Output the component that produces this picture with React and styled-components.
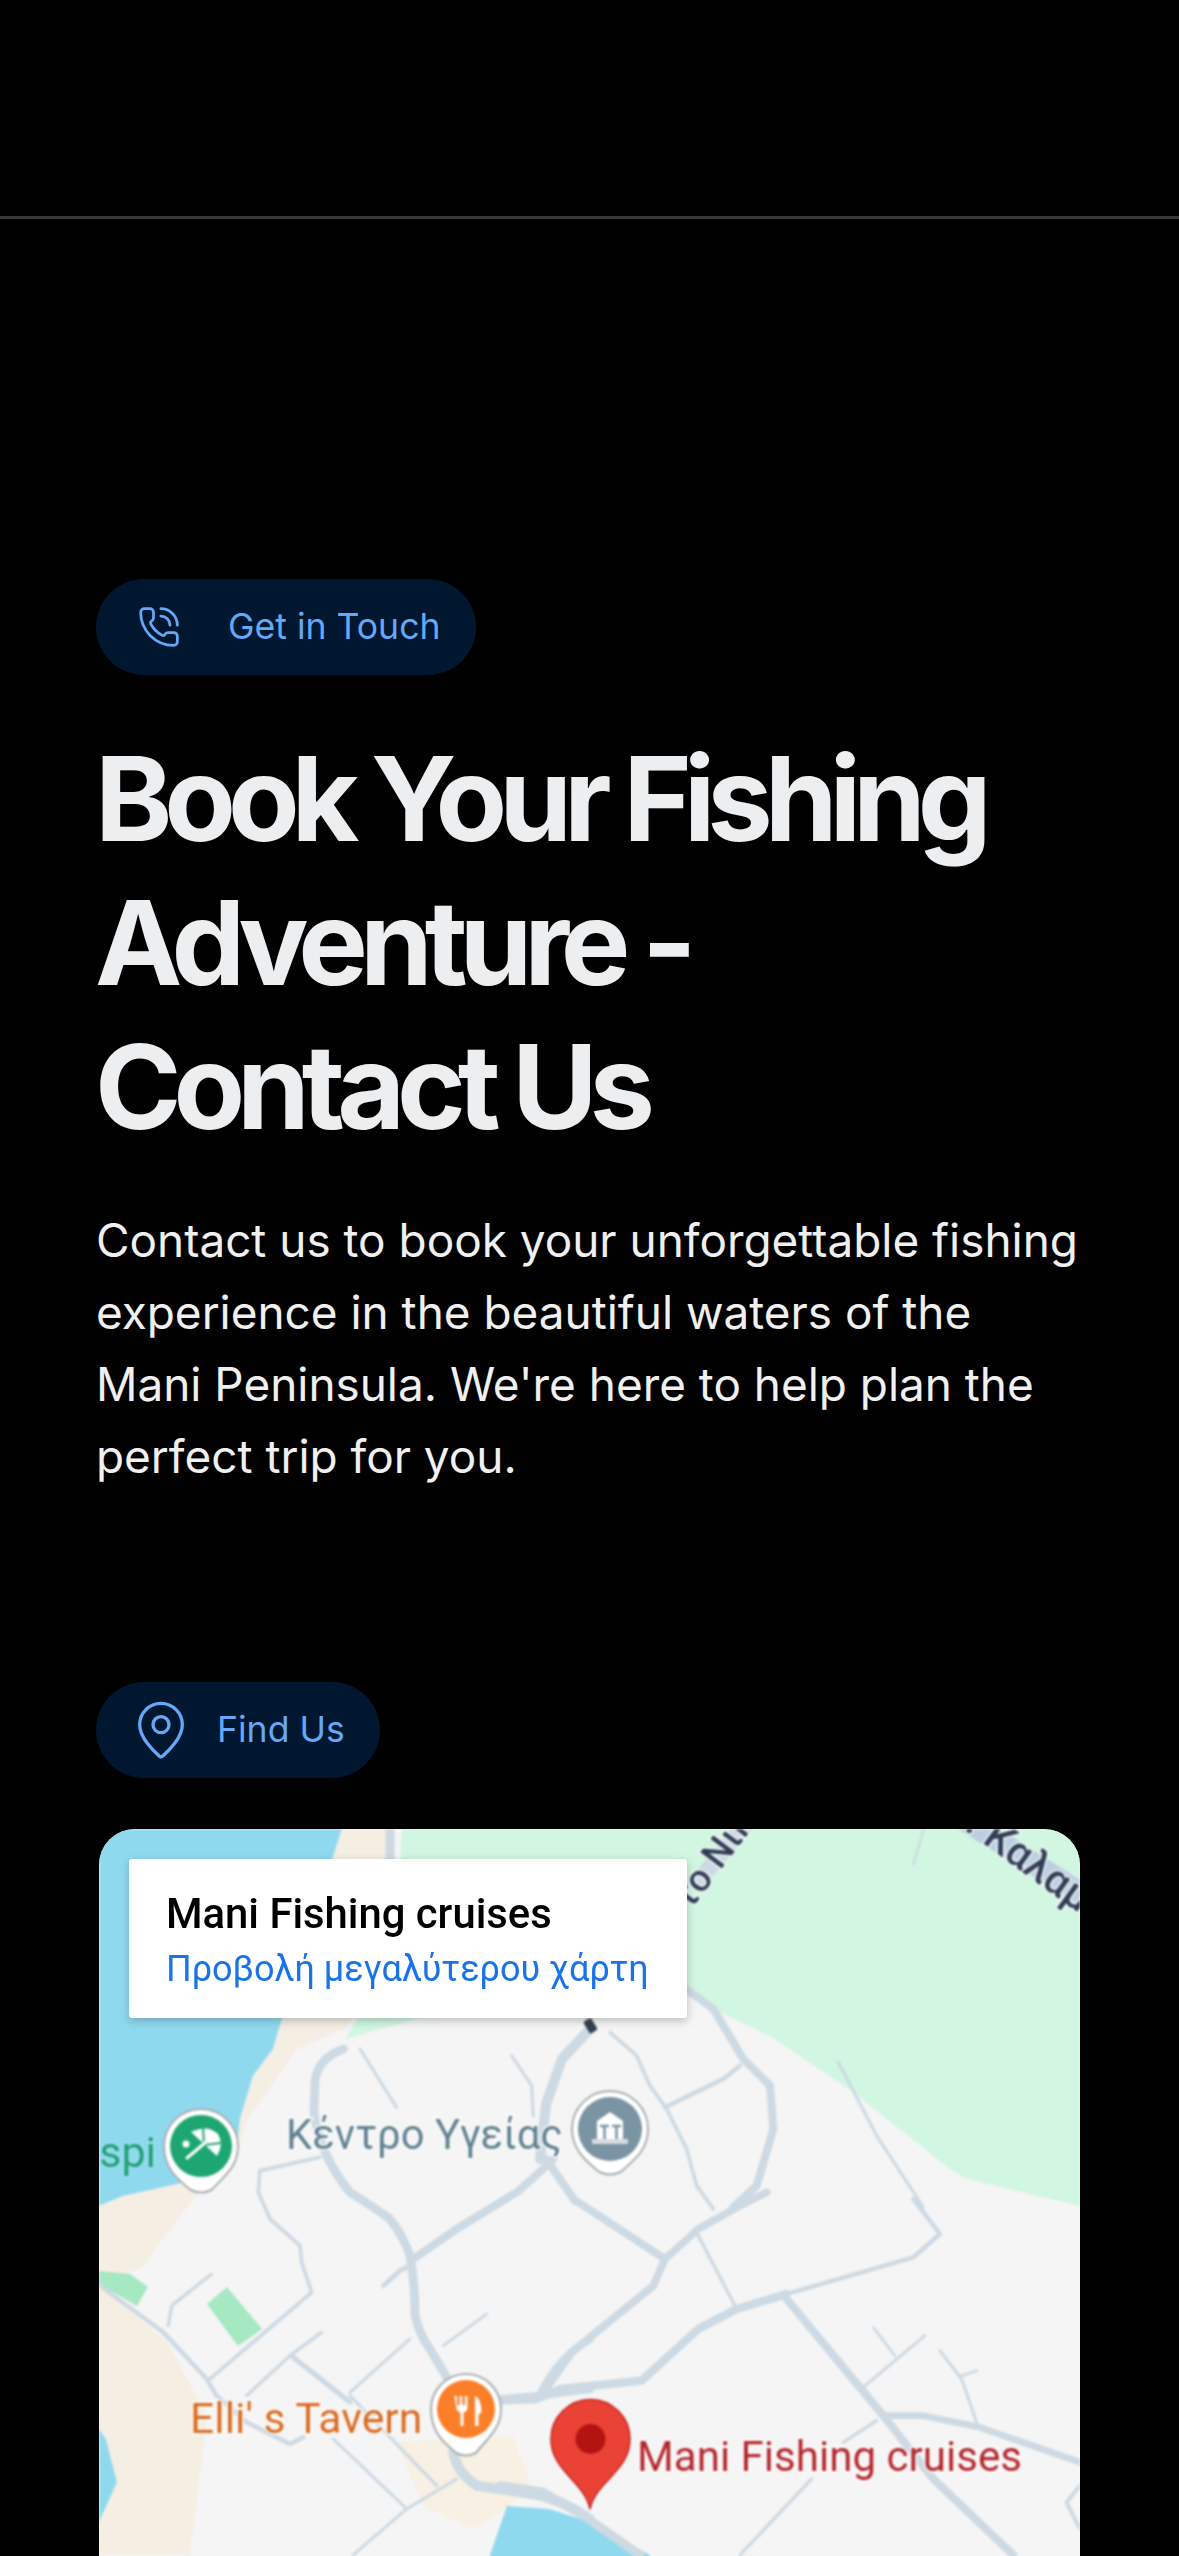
import React from "react";
import styled, { createGlobalStyle } from "styled-components";
import { PhoneCall, MapPin } from "lucide-react";

const Global = createGlobalStyle`
  html, body { margin: 0; padding: 0; background: #000; }
  #root { height: 2556px; overflow: hidden; background: #000; }
`;
const Page = styled.div`
  display: flex; flex-direction: column; background: #000;
  font-family: Inter, "Noto Sans", sans-serif;
`;
const TopBar = styled.header`
  height: 216px; border-bottom: 3px solid #383838;
`;
const Main = styled.main`
  display: flex; flex-direction: column; align-items: flex-start;
  padding: 360px 96px 0;
`;
const Pill = styled.div`
  display: inline-flex; align-items: center; height: 96px; box-sizing: border-box;
  padding: 0 35px 0 ${p => p.$lead}px; gap: ${p => p.$gap}px;
  border-radius: 48px; background: #00172f; color: #64a8f6;
  font-size: 35.6px; line-height: 1; white-space: nowrap;
`;
const Heading = styled.h1`
  margin: 52px 0 0; font-size: 117px; line-height: 144px; font-weight: 700;
  letter-spacing: -8.1px; color: #eceef0; transform: translateX(-1px);
`;
const Lead = styled.p`
  margin: 46px 0 0; font-size: 45.9px; line-height: 72px; font-weight: 400; color: #f0f0f0;
`;
const FindSection = styled.section`
  margin-top: 189px; display: flex; flex-direction: column; align-items: flex-start; width: 100%;
`;
const MapFrame = styled.div`
  position: relative; box-sizing: border-box; margin: 51px 0 0 3px;
  width: 981px; height: 800px; border-radius: 36px; overflow: hidden; background: #f5f5f5;
`;
const MapArt = styled.svg`
  display: block; width: 981px; height: 800px; filter: blur(0.9px);
`;
const PlaceCard = styled.div`
  position: absolute; left: 30px; top: 30px; width: 558px; height: 159px; box-sizing: border-box;
  padding: 31px 37px; background: #fff; border-radius: 3px;
  box-shadow: 0 3px 8px rgba(60,64,67,.3);
  font-family: Roboto, sans-serif; filter: blur(0.5px);
`;
const PlaceName = styled.div`
  font-size: 41.8px; line-height: 48px; font-weight: 500; color: #000; white-space: nowrap;
`;
const PlaceLink = styled.div`
  margin-top: 10px; font-size: 36px; line-height: 42px; color: #1a73e8; white-space: nowrap;
`;

const ROAD = "#cdd9e3";
const Roads = styled.g`
  fill: none; stroke: ${ROAD}; stroke-linecap: round; stroke-linejoin: round;
`;
const Label = styled.text`
  font-family: Roboto, sans-serif; paint-order: stroke; stroke: ${p => p.$halo || "#fff"}; stroke-opacity: .85;
  stroke-width: 3px; font-size: ${p => p.$size}px; fill: ${p => p.$color};
  font-weight: ${p => p.$weight || 400};
`;

const Pin = ({ x, y, r, tip, fill, children }) => {
  const R = r + 6;
  return (
    <g>
      <path
        d={`M${x - R} ${y} a${R} ${R} 0 1 1 ${2 * R} 0 c0 ${R * 0.55} -${R * 0.35} ${R * 0.8} -${R * 0.72} ${tip - y - 3} q-${R * 0.28} 5 -${R * 0.56} 0 c-${R * 0.37} -${R * 0.3} -${R * 0.72} -${R * 0.6} -${R * 0.72} -${tip - y - 3}z`}
        fill="#fff" stroke="#a9adb0" strokeWidth="2" />
      <circle cx={x} cy={y} r={r} fill={fill} />
      {children}
    </g>
  );
};

const MapDrawing = () => (
  <MapArt viewBox="99 1830 981 800">
    <rect x="99" y="1830" width="981" height="800" fill="#f5f5f5" />
    {/* water */}
    <path d="M99 1830H342L300 1960L273 2050L253 2077L240 2120L237 2150L187 2183L123 2197L99 2207Z" fill="#8fd9ef" />
    <path d="M99 2430L106 2440L117 2483L110 2523L99 2556Z" fill="#8fd9ef" />
    {/* sand */}
    <path d="M342 1830H395L395 1960L345 2030L297 2050L250 2117L237 2147L183 2213L140 2270L99 2283V2207L123 2197L187 2183L237 2150L240 2120L253 2077L273 2050L300 1960Z" fill="#f5eee3" />
    <path d="M99 2286L167 2343L207 2417L190 2556H99V2523L117 2483L106 2440L99 2430Z" fill="#f5eee3" />
    <path d="M397 2443L423 2507L473 2530L510 2507L530 2483L513 2437L470 2440Z" fill="#f7f0e3" />
    {/* parks */}
    <path d="M402 1830H1080V2207L967 2180L950 2170L853 2093L770 2037L720 2013L688 1990L420 2019L345 2040L395 1960Z" fill="#d1f6e1" />
    <path d="M207 2305L227 2288L262 2330L238 2347Z" fill="#a5e8c2" />
    <path d="M99 2272L130 2275L148 2288L137 2307L99 2285Z" fill="#a5e8c2" />
    <path d="M490 2556L507 2507L549 2510L590 2523L650 2556V2630H490Z" fill="#8fd9ef" />
    {/* roads traced west */}
    <Roads transform="translate(90 2050) scale(0.3333)">
      <path strokeWidth="26" d="M760 0Q680 30 675 100L672 190Q690 320 780 430Q860 480 900 510Q940 560 960 620Q975 700 975 800Q990 860 1020 900L1085 1010" />
      <path strokeWidth="30" d="M1090 1210Q1100 1270 1160 1310Q1260 1325 1350 1340Q1430 1360 1500 1410" />
      <path strokeWidth="24" d="M1390 330Q1340 380 1280 430L1100 540L970 630" />
      <path strokeWidth="14" d="M880 710L930 665L960 650" />
      <path strokeWidth="9" d="M810 0L920 175" />
      <path strokeWidth="9" d="M1265 20L1325 110L1330 200" />
      <path strokeWidth="11" d="M690 325L510 365L505 430L540 510L630 590L635 640L665 730L360 990" />
      <path strokeWidth="10" d="M365 675L245 770L235 830" />
      <path strokeWidth="13" d="M30 710L220 850L350 990L380 1040L470 1120L600 1185L640 1165" />
      <path strokeWidth="9" d="M730 1170L950 1380" />
      <path strokeWidth="9" d="M1100 1290L950 1380L790 1518" />
      <path strokeWidth="10" d="M695 850L600 920L470 1040" />
      <path strokeWidth="15" d="M610 925L780 1060" />
      <path strokeWidth="9" d="M780 1040L1040 1310" />
      <path strokeWidth="9" d="M1190 795L1060 890" />
      <path strokeWidth="9" d="M960 870L780 1030" />
      <path strokeWidth="24" d="M1240 1050L1350 1040L1500 1020" />
      <path strokeWidth="24" d="M1350 1040Q1400 930 1500 870" />
    </Roads>
    {/* roads traced east */}
    <Roads transform="translate(500 2200) scale(0.3333)">
      <path strokeWidth="23" d="M220 0L495 180" />
      <path strokeWidth="23" d="M495 180L595 90L720 20L800 -20" />
      <path strokeWidth="23" d="M495 180L460 260L215 460L135 575" />
      <path strokeWidth="25" d="M0 605L110 600L180 570L425 545L595 390L710 330L860 285" />
      <path strokeWidth="13" d="M860 285L1240 175L1320 105L1240 0" />
      <path strokeWidth="24" d="M860 300L1150 650L1300 840L1540 1068" />
      <path strokeWidth="10" d="M595 110L705 320" />
      <path strokeWidth="8" d="M1120 385L1185 470" />
      <path strokeWidth="9" d="M1275 410L1095 560" />
      <path strokeWidth="9" d="M1320 455L1385 540L1430 670" />
      <path strokeWidth="8" d="M1385 530L1430 515" />
      <path strokeWidth="20" d="M1150 650L1270 650L1440 685L1740 790" />
      <path strokeWidth="10" d="M1130 665L1030 730" />
      <path strokeWidth="10" d="M935 840L720 1068" />
      <path strokeWidth="12" d="M1740 860L1700 910L1740 990" />
      <path strokeWidth="27" d="M0 860L130 880L250 950L420 1068" />
    </Roads>
    <Roads transform="translate(600 1810) scale(0.3333)">
      <path strokeWidth="24" d="M265 545L340 600L430 750L510 830L520 960L470 1130L400 1195" />
      <path strokeWidth="11" d="M30 670L110 740L150 830L200 900L260 1020L290 1130L340 1200" />
      <path strokeWidth="13" d="M195 895L370 810L420 770" />
      <path strokeWidth="9" d="M715 760L830 980L970 1195" />
      <path strokeWidth="7" d="M972 60L940 165" />
    </Roads>
    <Roads>
      <path strokeWidth="10" d="M590 2030L562 2060L546 2105L540 2160" />
      <path strokeWidth="8" d="M546 2160L575 2202" />
      <path strokeWidth="9" d="M390 1830V1862" />
      <path strokeWidth="22" stroke="#bccfe2" d="M955 1815L1090 1900" />
      <path strokeWidth="16" d="M700 1880L750 1820" />
    </Roads>
    <rect x="586" y="2020" width="9" height="14" rx="2" fill="#33414f" transform="rotate(-30 590 2027)" />

    {/* pins */}
    <Pin x={201} y={2147} r={31} tip={2194} fill="#1ea672">
      <path d="M191 2133Q208 2125 218 2135Q224 2145 217 2157Z" fill="#fff" />
      <g stroke="#1ea672" strokeWidth="2" fill="none">
        <path d="M204 2146L203 2129" />
        <path d="M204 2146L221 2144" />
      </g>
      <path d="M187 2159L206 2143" stroke="#fff" strokeWidth="3" strokeLinecap="round" />
      <circle cx="186" cy="2145" r="3.5" fill="#fff" />
    </Pin>
    <Pin x={610} y={2130} r={32} tip={2176} fill="#7a94a3">
      <path d="M597 2122L610 2113L623 2122V2142H597Z" fill="#fff" />
      <g stroke="#7a94a3" fill="none">
        <path d="M600 2127H609M604.5 2127V2140" strokeWidth="2.5" />
        <path d="M612 2127H621M616.5 2127V2140" strokeWidth="2.5" />
      </g>
      <rect x="592" y="2140" width="36" height="5" fill="#d5dde2" />
    </Pin>
    <Pin x={466} y={2410} r={29} tip={2457} fill="#fb7e29">
      <path d="M454.5 2397h2.6v9h2.6v-9h2.6v9h2.6v-9h2.6v12q0 3 -4 4.5v13.5h-3v-13.5q-4 -1.5 -4 -4.5z" fill="#fff" />
      <path d="M475 2397q6 2 6.5 16l-3 3v11h-3.5z" fill="#fff" />
    </Pin>

    {/* labels */}
    <Label x="44" y="2168" $size="43" $color="#1e9e75" $halo="#9fe0ee">Hospi</Label>
    <Label x="286" y="2150" $size="41.8" $color="#5f7f8f">Κέντρο Υγείας</Label>
    <Label x="190" y="2434" $size="42.7" $color="#d96a20">Elli' s Tavern</Label>
    <Label x="637" y="2472" $size="42.1" $color="#b3262c">Mani Fishing cruises</Label>
    <Label x="690" y="1912" $size="38" $color="#2f3d55" $weight="500" transform="rotate(-53 690 1912)">το Νικ</Label>
    <Label x="944" y="1816" $size="42" $color="#2f3d55" $weight="500" transform="rotate(36 944 1816)">ο. Καλαμ</Label>

    {/* destination marker */}
    <path d="M590 2510C584 2482 551 2472 551 2440A39 39 0 0 1 630 2440C630 2472 596 2482 590 2510Z" fill="#ea4335" stroke="#c5221f" strokeWidth="1.5" />
    <circle cx="590.5" cy="2440" r="15" fill="#b31412" />
  </MapArt>
);

export default function App() {
  return (
    <Page>
      <Global />
      <TopBar />
      <Main>
        <Pill $lead={41} $gap={47}>
          <PhoneCall size={44} strokeWidth={1.5} />
          <span>Get in Touch</span>
        </Pill>
        <Heading>Book Your Fishing<br />Adventure -<br />Contact Us</Heading>
        <Lead>
          Contact us to book your unforgettable fishing<br />
          experience in the beautiful waters of the<br />
          Mani Peninsula. We're here to help plan the<br />
          perfect trip for you.
        </Lead>
        <FindSection>
          <Pill $lead={33} $gap={24}>
            <MapPin size={64} strokeWidth={1.25} />
            <span>Find Us</span>
          </Pill>
          <MapFrame>
            <MapDrawing />
            <PlaceCard>
              <PlaceName>Mani Fishing cruises</PlaceName>
              <PlaceLink>Προβολή μεγαλύτερου χάρτη</PlaceLink>
            </PlaceCard>
          </MapFrame>
        </FindSection>
      </Main>
    </Page>
  );
}
